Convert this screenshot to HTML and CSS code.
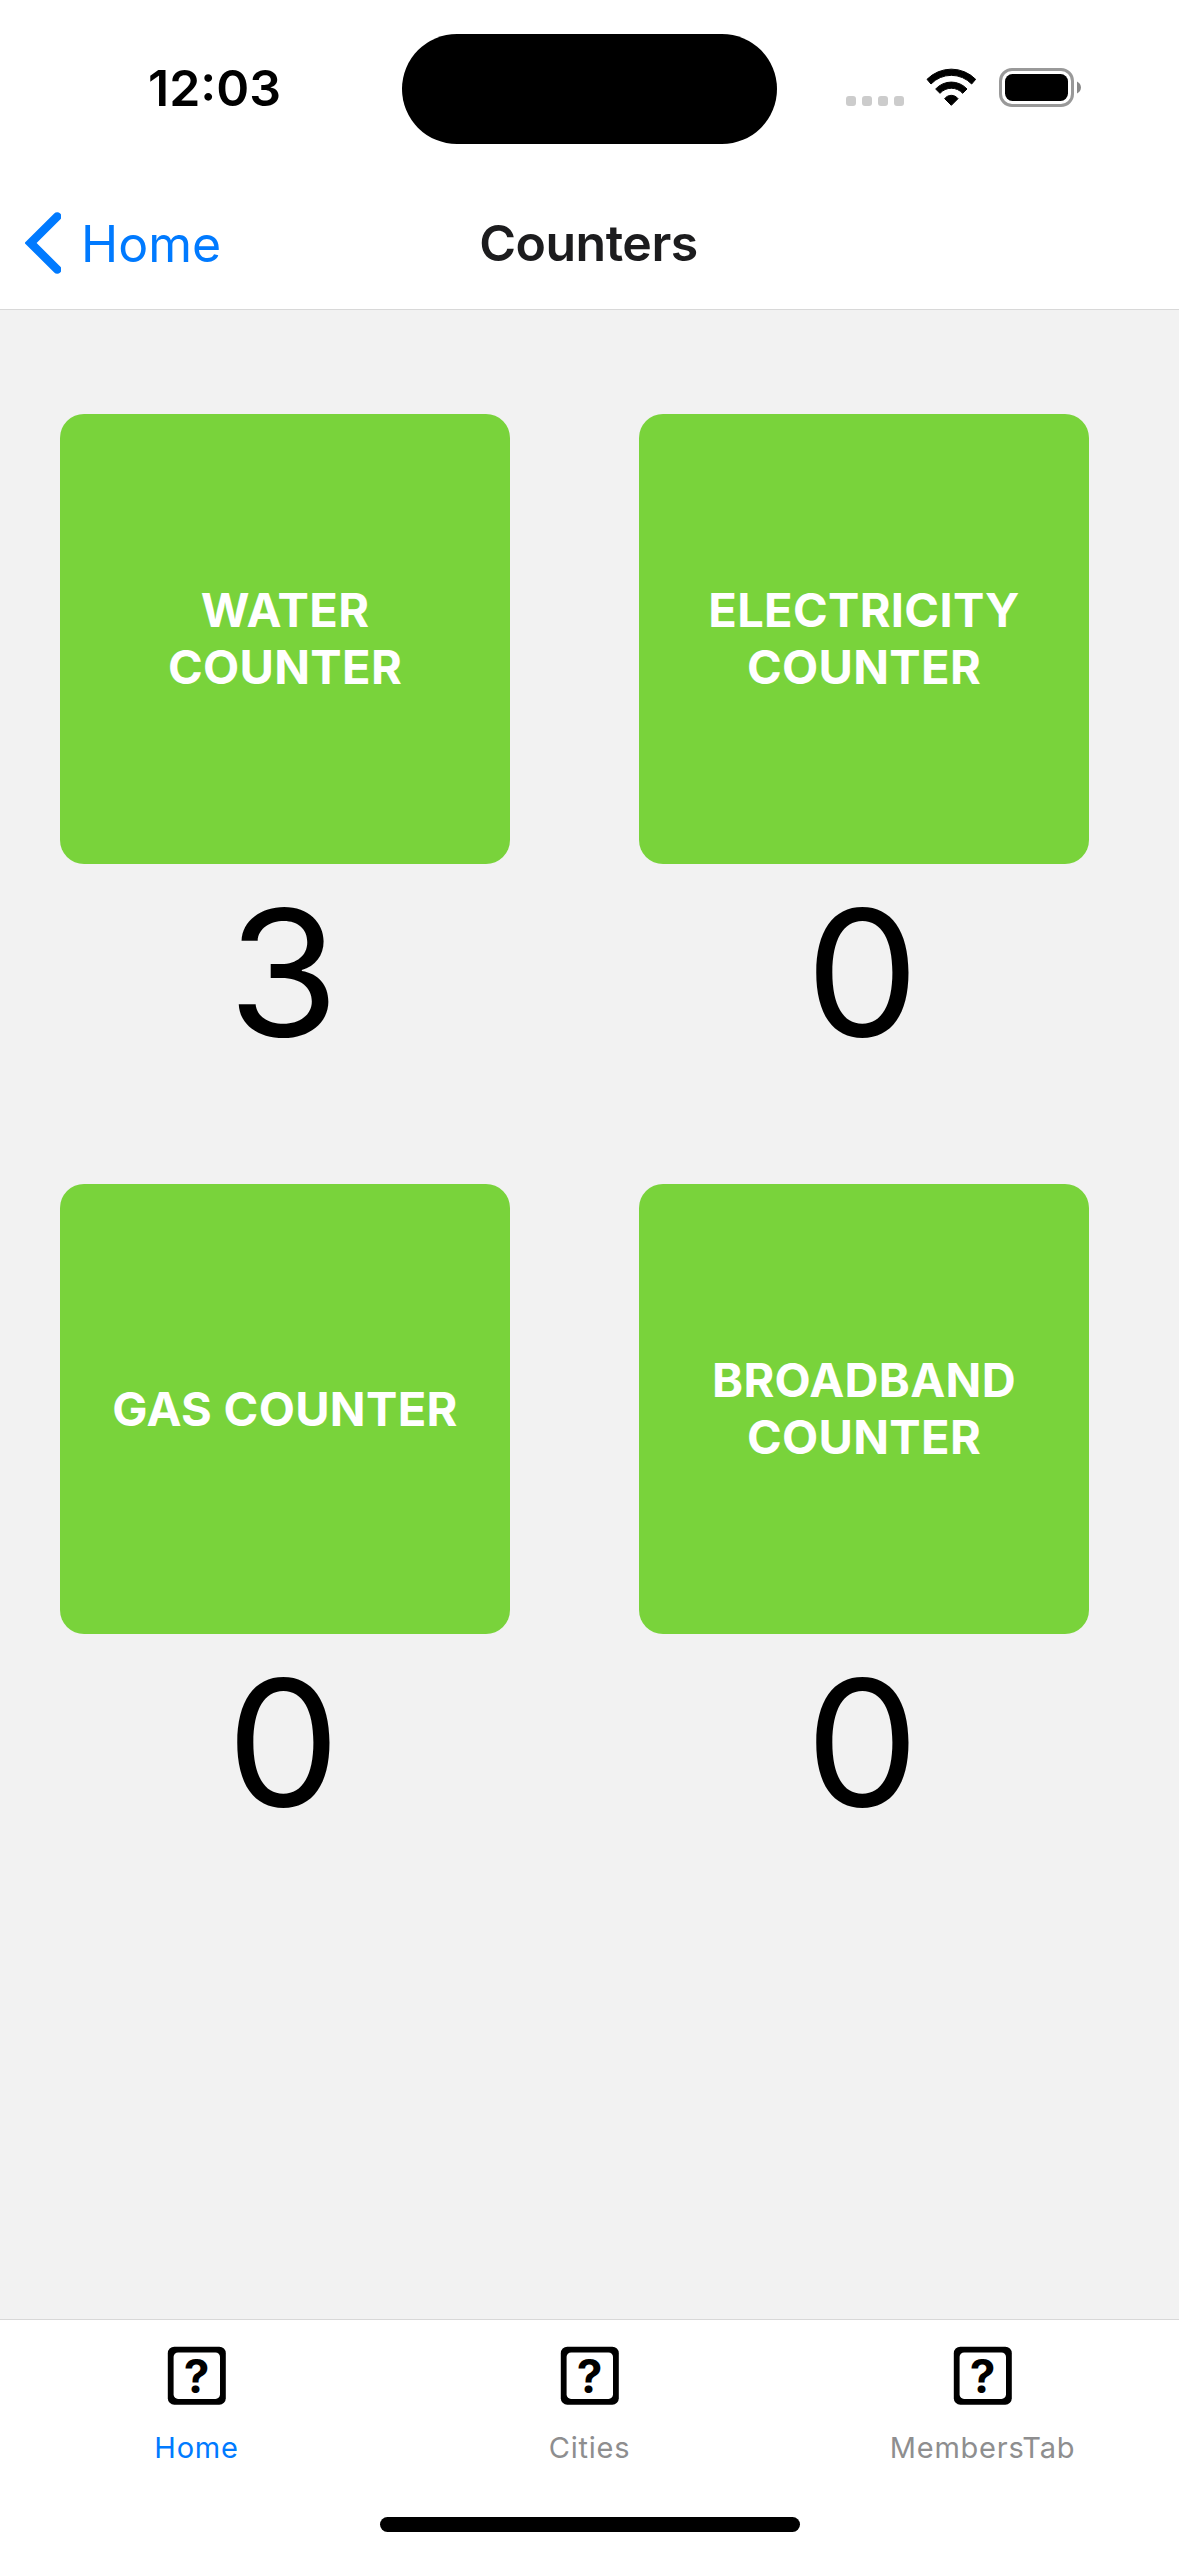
FILE: index.html
```html
<!DOCTYPE html>
<html lang="en">
<head>
<meta charset="utf-8">
<meta name="viewport" content="width=device-width">
<title>Counters</title>
<link rel="stylesheet" href="styles.css">
</head>
<body>
<div class="screen">
  <header class="top">
    <div class="status">
      <span class="time">12:03</span>
      <div class="island"></div>
      <div class="indicators">
        <svg class="signal" width="58" height="39" viewBox="0 0 58 39" fill="#ccc">
          <rect x="0" y="28" width="10" height="10" rx="3"/>
          <rect x="16" y="28" width="10" height="10" rx="3"/>
          <rect x="32" y="28" width="10" height="10" rx="3"/>
          <rect x="48" y="28" width="10" height="10" rx="3"/>
        </svg>
        <svg class="wifi" width="52" height="39" viewBox="285 54 156 117">
          <path stroke="#000" stroke-width="3" stroke-linejoin="round" d="M291 88A102.500 102.500 0 0 1 437 88L425 102A84.500 84.500 0 0 0 303 102ZM317 117A63.500 63.500 0 0 1 411 117L398 130A45.500 45.500 0 0 0 330 130ZM344 146A25 25 0 0 1 384 146L364 166Z"/>
        </svg>
        <svg class="battery" width="83" height="39" viewBox="0 0 83 39">
          <rect x="1.500" y="1.500" width="72" height="36" rx="11.500" fill="none" stroke="#999" stroke-width="3"/>
          <rect x="6" y="6" width="63" height="27" rx="7.500"/>
          <path fill="#888" d="M78 13.500C83.300 16 83.300 23 78 25.500Z"/>
        </svg>
      </div>
    </div>
    <nav class="navbar">
      <a class="back">
        <svg width="36" height="62" viewBox="0 0 36 62" fill="none" stroke="#007aff" stroke-width="8.500" stroke-linecap="round">
          <path d="M32.200 4.500L5.600 31L32.200 57.500"/>
        </svg>
        <span>Home</span>
      </a>
      <h1 class="title">Counters</h1>
    </nav>
  </header>

  <main class="counters">
    <section class="counter">
      <button class="tile">WATER COUNTER</button>
      <div class="value">3</div>
    </section>
    <section class="counter">
      <button class="tile">ELECTRICITY COUNTER</button>
      <div class="value">0</div>
    </section>
    <section class="counter">
      <button class="tile">GAS COUNTER</button>
      <div class="value">0</div>
    </section>
    <section class="counter">
      <button class="tile">BROADBAND COUNTER</button>
      <div class="value">0</div>
    </section>
  </main>

  <footer class="bottom">
    <nav class="tabs">
      <a class="tab tab-active">
        <svg class="tab-icon" width="60" height="60" viewBox="0 0 60 60">
          <rect x="0.800" y="0.700" width="58" height="58" rx="6.500"/>
          <rect x="6.600" y="6.500" width="46.400" height="46.400" rx="4.500" fill="#fff"/>
          <text x="29.500" y="46.500" text-anchor="middle">?</text>
        </svg>
        <span>Home</span>
      </a>
      <a class="tab">
        <svg class="tab-icon" width="60" height="60" viewBox="0 0 60 60">
          <rect x="0.800" y="0.700" width="58" height="58" rx="6.500"/>
          <rect x="6.600" y="6.500" width="46.400" height="46.400" rx="4.500" fill="#fff"/>
          <text x="29.500" y="46.500" text-anchor="middle">?</text>
        </svg>
        <span>Cities</span>
      </a>
      <a class="tab">
        <svg class="tab-icon" width="60" height="60" viewBox="0 0 60 60">
          <rect x="0.800" y="0.700" width="58" height="58" rx="6.500"/>
          <rect x="6.600" y="6.500" width="46.400" height="46.400" rx="4.500" fill="#fff"/>
          <text x="29.500" y="46.500" text-anchor="middle">?</text>
        </svg>
        <span>MembersTab</span>
      </a>
    </nav>
    <div class="home-bar"></div>
  </footer>
</div>
</body>
</html>
```
FILE: styles.css
```css
* {
  box-sizing: border-box;
}

body {
  margin: 0;
  font-family: Inter, "Liberation Sans", sans-serif;
  color: #000;
}

.screen {
  display: flex;
  flex-direction: column;
  width: 1179px;
  height: 2556px;
  background: #f2f2f2;
}

.top {
  background: #fff;
  border-bottom: 1px solid #d8d8d8;
}

.status {
  display: grid;
  grid-template-columns: 402px 375px 1fr;
  height: 177px;
}

.time {
  padding: 58px 0 0 148px;
  font-size: 50px;
  font-weight: 600;
  line-height: 60px;
}

.island {
  height: 110px;
  margin-top: 34px;
  border-radius: 55px;
  background: #000;
}

.indicators {
  display: flex;
  padding: 68px 0 0 69px;
}

.wifi {
  margin-left: 21px;
}

.battery {
  margin-left: 22px;
}

.navbar {
  display: grid;
  grid-template-columns: 1fr auto 1fr;
  align-items: center;
  height: 132px;
}

.back {
  display: flex;
  align-items: center;
  gap: 20px;
  padding-left: 25px;
  color: #007aff;
  font-size: 50px;
  line-height: 62px;
}

.back span {
  padding-top: 1px;
}

.title {
  margin: 0;
  padding-right: 2px;
  color: #1c1c1e;
  font-size: 50px;
  font-weight: 600;
  line-height: 60px;
  letter-spacing: -0.5px;
}

.counters {
  display: grid;
  flex: 1;
  grid-template-columns: 450px 450px;
  gap: 104px 129px;
  align-content: start;
  padding: 104px 60px 0;
}

.tile {
  display: flex;
  align-items: center;
  justify-content: center;
  width: 450px;
  height: 450px;
  padding: 0 50px 2px;
  border: 0;
  border-radius: 24px;
  background: #79d33b;
  color: #fff;
  font: inherit;
  font-size: 47px;
  font-weight: 700;
  line-height: 57px;
  letter-spacing: 0.3px;
  text-align: center;
}

.value {
  padding-right: 3px;
  font-size: 175px;
  line-height: 216px;
  text-align: center;
  transform: scaleX(1.03);
}

.bottom {
  height: 237px;
  border-top: 1px solid #d8d8d8;
  background: #fff;
}

.tabs {
  display: grid;
  grid-template-columns: repeat(3, 1fr);
  height: 197px;
  padding-top: 26px;
}

.tab {
  display: flex;
  flex-direction: column;
  align-items: center;
  gap: 24px;
  color: #8e8e8f;
  font-size: 29px;
  line-height: 36px;
  letter-spacing: 0.75px;
}

.tab-active {
  color: #007aff;
}

.tab-icon {
  font-size: 46px;
  font-weight: 700;
  letter-spacing: 0;
}

.home-bar {
  width: 420px;
  height: 15px;
  margin: 0 auto;
  border-radius: 8px;
  background: #000;
}
```
